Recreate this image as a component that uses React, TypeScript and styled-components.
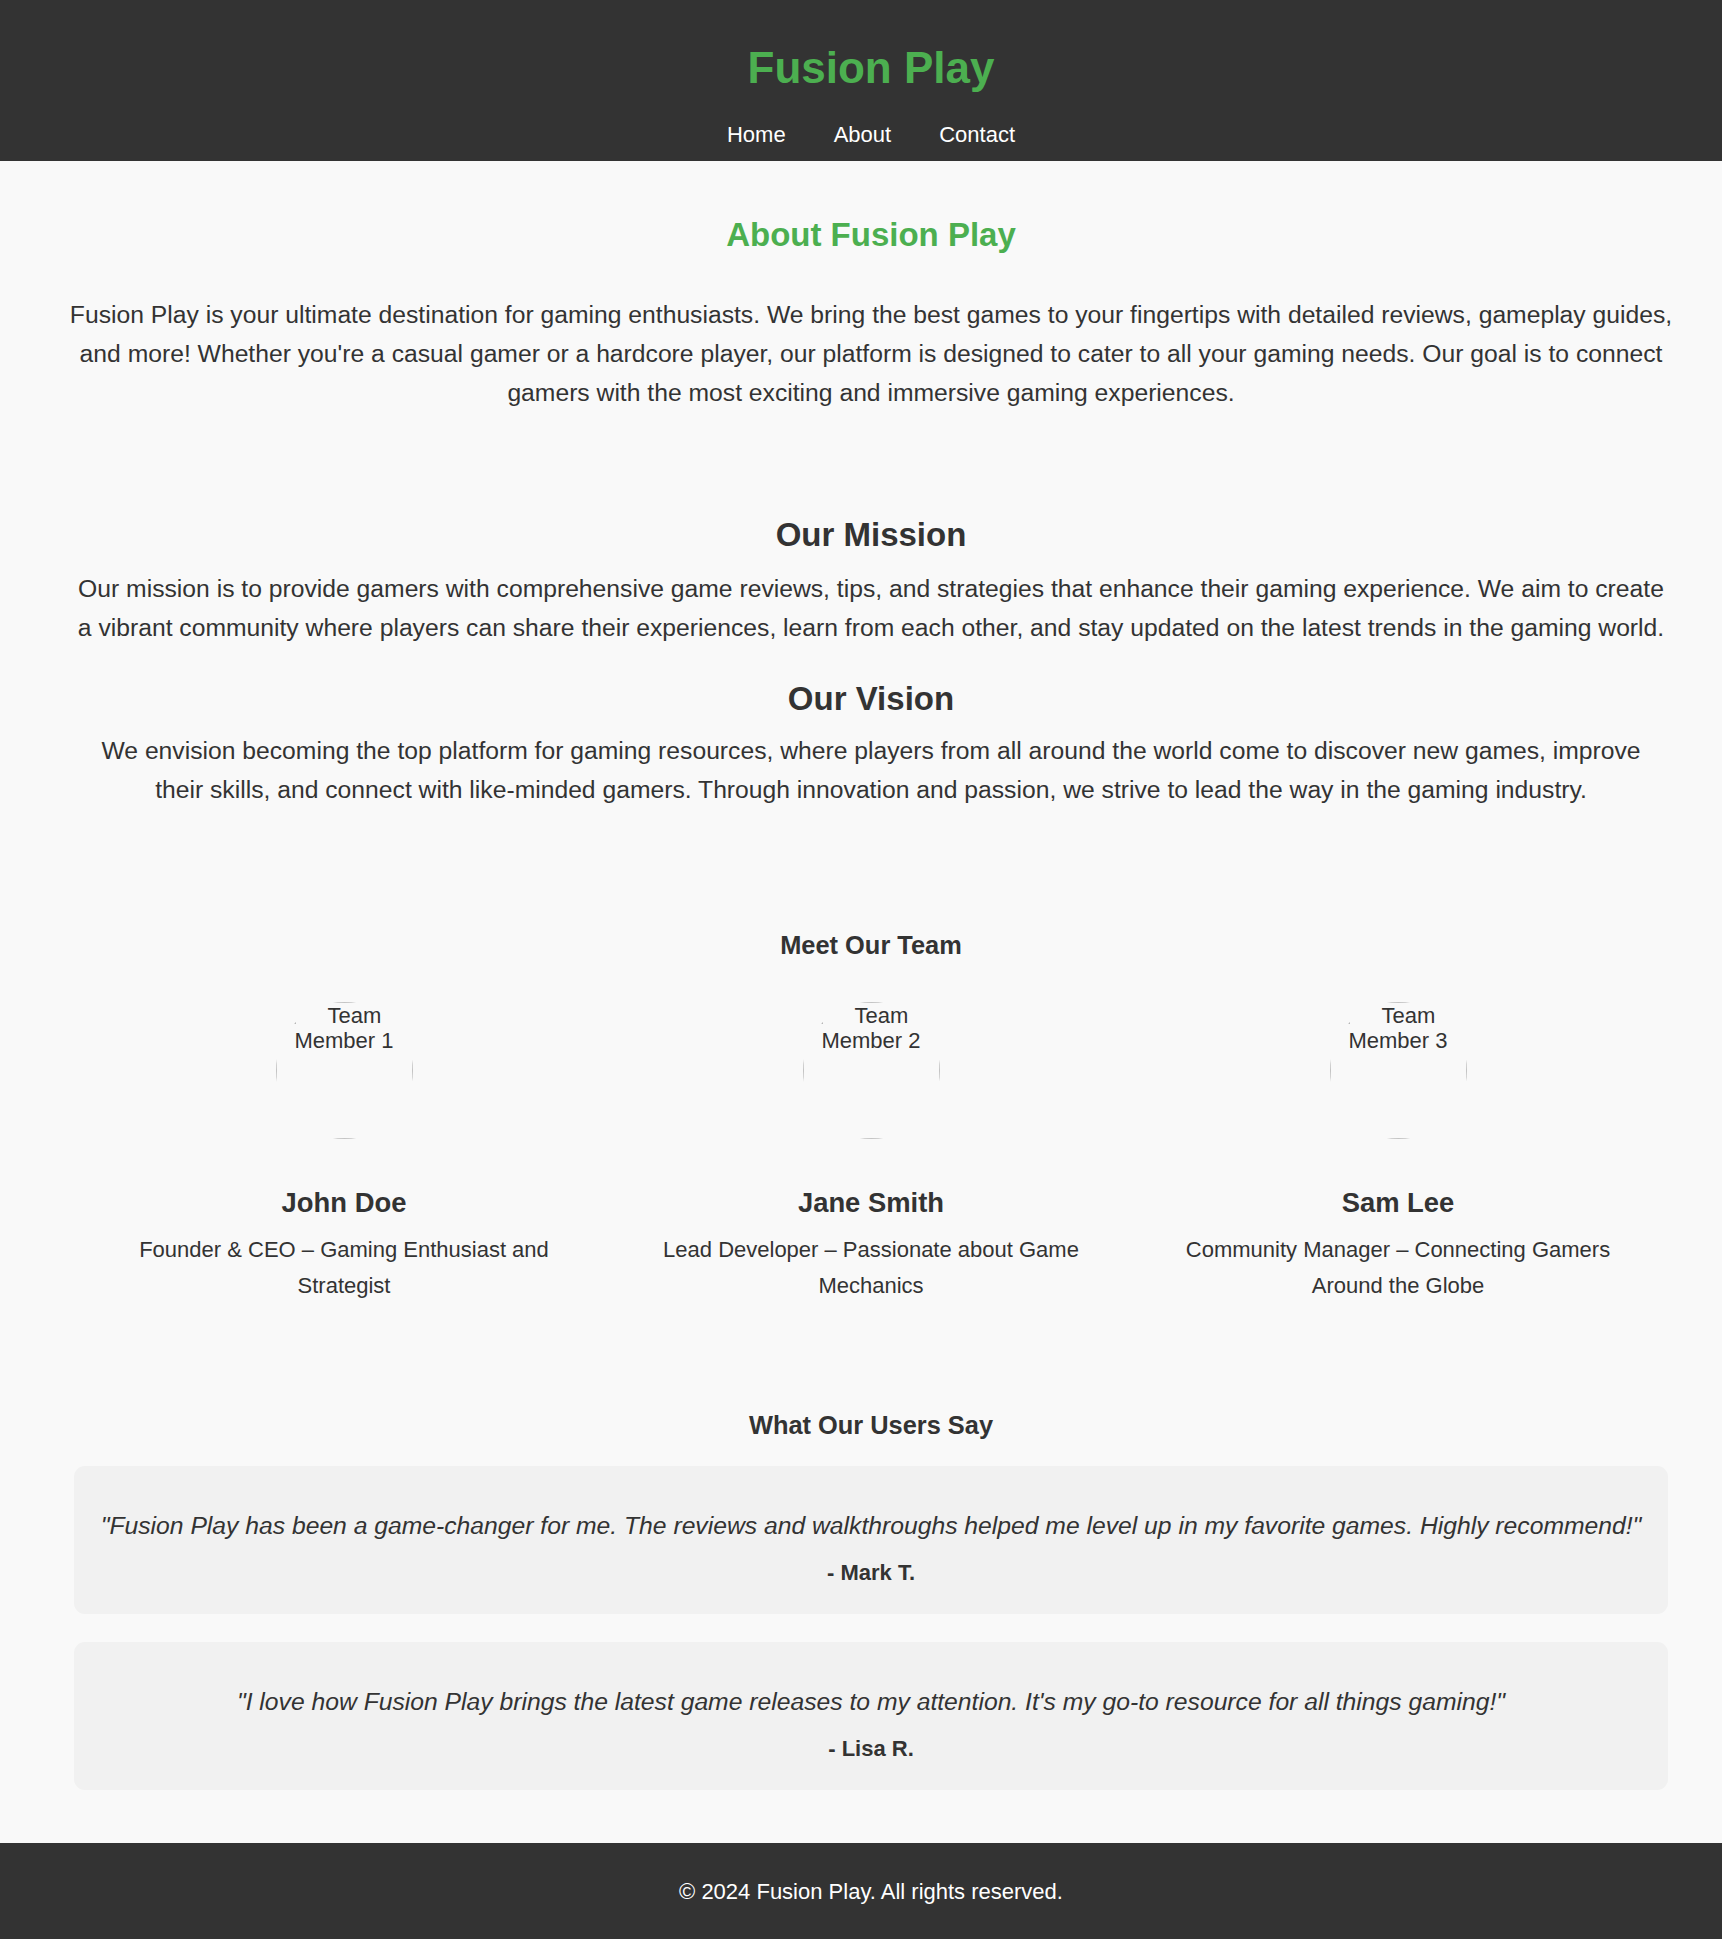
import React from "react";
import styled, { createGlobalStyle } from "styled-components";

const team = [
  { photo: "Team Member 1", name: "John Doe", role: "Founder & CEO – Gaming Enthusiast and Strategist" },
  { photo: "Team Member 2", name: "Jane Smith", role: "Lead Developer – Passionate about Game Mechanics" },
  { photo: "Team Member 3", name: "Sam Lee", role: "Community Manager – Connecting Gamers Around the Globe" },
];

const testimonials = [
  {
    quote:
      "\"Fusion Play has been a game-changer for me. The reviews and walkthroughs helped me level up in my favorite games. Highly recommend!\"",
    author: "- Mark T.",
  },
  {
    quote:
      "\"I love how Fusion Play brings the latest game releases to my attention. It's my go-to resource for all things gaming!\"",
    author: "- Lisa R.",
  },
];

function Avatar({ alt }: { alt: string }) {
  return (
    <AvatarCircle>
      <AvatarFrame>
        <BrokenIcon viewBox="0 0 16 16">
          <path d="M1.5 1.5h9l4 4v9h-13z" fill="#fff" stroke="#a0a0a0" />
          <path d="M3 13.5l3.5-4.5 2.5 2.5 2-2 2.5 4z" fill="#6aa86a" />
        </BrokenIcon>
        {alt}
      </AvatarFrame>
    </AvatarCircle>
  );
}

function App() {
  return (
    <Page>
      <GlobalStyle />
      <Header>
        <Logo>Fusion Play</Logo>
        <Nav>
          <NavLink href="#">Home</NavLink>
          <NavLink href="#">About</NavLink>
          <NavLink href="#">Contact</NavLink>
        </Nav>
      </Header>

      <Main>
        <PageTitle>About Fusion Play</PageTitle>
        <Lead>
          Fusion Play is your ultimate destination for gaming enthusiasts. We bring the best games to your
          fingertips with detailed reviews, gameplay guides, and more! Whether you're a casual gamer or a
          hardcore player, our platform is designed to cater to all your gaming needs. Our goal is to connect
          gamers with the most exciting and immersive gaming experiences.
        </Lead>

        <SectionTitle $top={103}>Our Mission</SectionTitle>
        <SectionText $top={14} $width={1605}>
          Our mission is to provide gamers with comprehensive game reviews, tips, and strategies that enhance
          their gaming experience. We aim to create a vibrant community where players can share their
          experiences, learn from each other, and stay updated on the latest trends in the gaming world.
        </SectionText>

        <SectionTitle $top={32}>Our Vision</SectionTitle>
        <SectionText $top={12} $width={1560}>
          We envision becoming the top platform for gaming resources, where players from all around the world
          come to discover new games, improve their skills, and connect with like-minded gamers. Through
          innovation and passion, we strive to lead the way in the gaming industry.
        </SectionText>

        <BlockTitle $top={120}>Meet Our Team</BlockTitle>
        <TeamRow>
          {team.map((m) => (
            <MemberCard key={m.name}>
              <Avatar alt={m.photo} />
              <MemberName>{m.name}</MemberName>
              <MemberRole>{m.role}</MemberRole>
            </MemberCard>
          ))}
        </TeamRow>

        <BlockTitle $top={105}>What Our Users Say</BlockTitle>
        <Testimonials>
          {testimonials.map((t) => (
            <TestimonialCard key={t.author}>
              <Quote>{t.quote}</Quote>
              <Author>{t.author}</Author>
            </TestimonialCard>
          ))}
        </Testimonials>
      </Main>

      <Footer>© 2024 Fusion Play. All rights reserved.</Footer>
    </Page>
  );
}

const GlobalStyle = createGlobalStyle`
  html, body {
    margin: 0;
    padding: 0;
    overflow-x: hidden;
  }
  body {
    background: #f9f9f9;
    color: #333;
    font-family: "Liberation Sans", Arial, Helvetica, sans-serif;
  }
`;

const Page = styled.div`
  width: calc(100% + 20px);
  display: flex;
  flex-direction: column;
`;

const Header = styled.header`
  background: #333;
  padding: 41px 0 9px;
  display: flex;
  flex-direction: column;
  align-items: center;
`;

const Logo = styled.h1`
  margin: 0;
  font-size: 44px;
  line-height: 53px;
  font-weight: 700;
  color: #4caf50;
`;

const Nav = styled.nav`
  margin-top: 24px;
  display: flex;
  gap: 48px;
`;

const NavLink = styled.a`
  color: #fff;
  text-decoration: none;
  font-size: 22px;
  line-height: 34px;
`;

const Main = styled.main`
  width: 1610px;
  margin: 0 auto;
  display: flex;
  flex-direction: column;
  align-items: center;
  text-align: center;
`;

const PageTitle = styled.h2`
  margin: 54px 0 0;
  font-size: 33px;
  line-height: 40px;
  color: #4caf50;
`;

const Lead = styled.p`
  margin: 40px 0 0;
  font-size: 24.7px;
  line-height: 39px;
`;

const SectionTitle = styled.h2<{ $top: number }>`
  margin: ${(p) => p.$top}px 0 0;
  font-size: 33px;
  line-height: 40px;
  color: #333;
`;

const SectionText = styled.p<{ $top: number; $width: number }>`
  margin: ${(p) => p.$top}px 0 0;
  max-width: ${(p) => p.$width}px;
  font-size: 24.7px;
  line-height: 39px;
`;

const BlockTitle = styled.h3<{ $top: number }>`
  margin: ${(p) => p.$top}px 0 0;
  font-size: 25.4px;
  line-height: 32px;
  color: #333;
`;

const TeamRow = styled.div`
  margin-top: 41px;
  display: flex;
  justify-content: center;
  gap: 27px;
`;

const MemberCard = styled.div`
  width: 500px;
  padding: 0 20px;
  box-sizing: border-box;
  display: flex;
  flex-direction: column;
  align-items: center;
`;

const AvatarCircle = styled.div`
  width: 137px;
  height: 137px;
  border-radius: 50%;
  overflow: hidden;
`;

const AvatarFrame = styled.div`
  width: 100%;
  height: 100%;
  box-sizing: border-box;
  border: 1px solid #c4c4c4;
  font-size: 22px;
  line-height: 25px;
  text-align: center;
  color: #333;
`;

const BrokenIcon = styled.svg`
  float: left;
  width: 16px;
  height: 16px;
  margin: 6px 1px 0 4px;
`;

const MemberName = styled.h3`
  margin: 47px 0 0;
  font-size: 27.4px;
  line-height: 34px;
  color: #333;
`;

const MemberRole = styled.p`
  margin: 12px 0 0;
  font-size: 22px;
  line-height: 36px;
`;

const Testimonials = styled.div`
  margin-top: 25px;
  display: flex;
  flex-direction: column;
  gap: 28px;
`;

const TestimonialCard = styled.div`
  width: 1594px;
  box-sizing: border-box;
  padding: 40px 20px 24px;
  background: #f1f1f1;
  border-radius: 11px;
`;

const Quote = styled.p`
  margin: 0;
  font-size: 24.7px;
  line-height: 39px;
  font-style: italic;
`;

const Author = styled.p`
  margin: 10px 0 0;
  font-size: 22px;
  line-height: 35px;
  font-weight: 700;
`;

const Footer = styled.footer`
  margin-top: 53px;
  background: #333;
  color: #fff;
  text-align: center;
  padding: 32px 0 34px;
  font-size: 22px;
  line-height: 34px;
`;

export default App;
